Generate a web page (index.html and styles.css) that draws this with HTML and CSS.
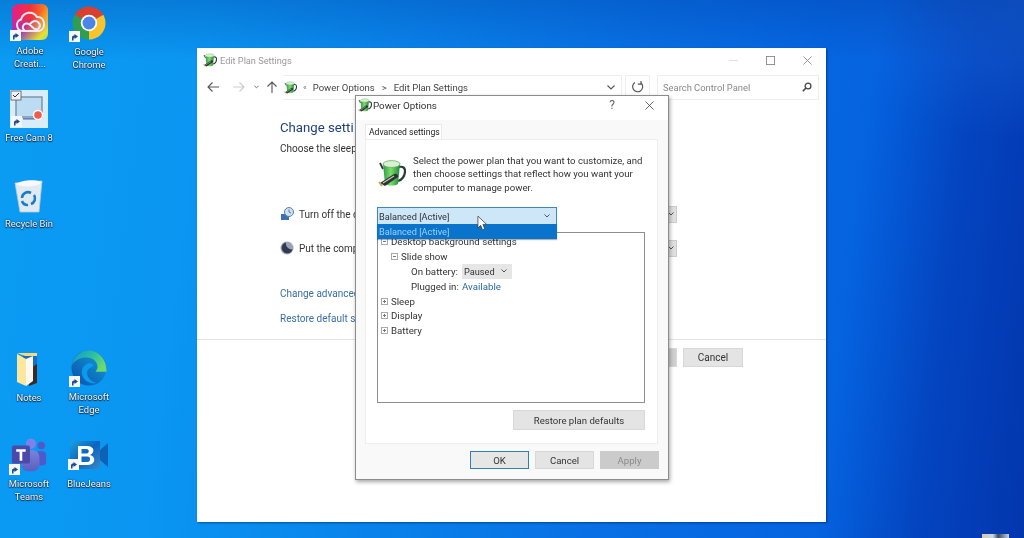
FILE: index.html
```html
<!DOCTYPE html>
<html lang="en">
<head>
<meta charset="utf-8">
<title>Power Options</title>
<link rel="stylesheet" href="styles.css">
</head>
<body>
<svg class="defs" width="0" height="0" aria-hidden="true">
  <defs>
    <linearGradient id="gBattery" x1="0" y1="0" x2="1" y2="0"><stop offset="0" stop-color="#2a9a48"/><stop offset=".45" stop-color="#7edc6a"/><stop offset="1" stop-color="#1c8a3c"/></linearGradient>
    <linearGradient id="gAdobeBase" x1="0" y1="0" x2="1" y2="0"><stop offset="0" stop-color="#e0208c"/><stop offset=".5" stop-color="#f0303c"/><stop offset="1" stop-color="#f88a20"/></linearGradient>
    <linearGradient id="gAdobeL" x1="0" y1="0" x2="0" y2="1"><stop offset=".35" stop-color="#8040e0" stop-opacity="0"/><stop offset="1" stop-color="#6a3ce8"/></linearGradient>
    <linearGradient id="gAdobeR" x1="0" y1="0" x2="1" y2="1"><stop offset=".5" stop-color="#f8d020" stop-opacity="0"/><stop offset=".85" stop-color="#e8e030"/><stop offset="1" stop-color="#90e070"/></linearGradient>
    <linearGradient id="gEdge" x1="0" y1="1" x2="1" y2="0"><stop offset="0" stop-color="#0b4fa8"/><stop offset=".6" stop-color="#0f80c8"/><stop offset="1" stop-color="#1a9ad0"/></linearGradient>
    <linearGradient id="gEdgeTop" x1="0" y1="0" x2="1" y2=".5"><stop offset="0" stop-color="#1098cc"/><stop offset=".6" stop-color="#30c0a0"/><stop offset="1" stop-color="#6bd870"/></linearGradient>
    <linearGradient id="gTeams" x1="0" y1="0" x2="0" y2="1"><stop offset="0" stop-color="#7b83d8"/><stop offset="1" stop-color="#5a5fc0"/></linearGradient>
    <linearGradient id="gBlue" x1="0" y1="0" x2="1" y2="1"><stop offset="0" stop-color="#1aa0e0"/><stop offset=".5" stop-color="#0c64bc"/><stop offset="1" stop-color="#3a88c8"/></linearGradient>
    <symbol id="power" viewBox="0 0 28 28">
      <path d="M21 8c4-1 6 1 6 4 0 5-3 9-7 10" fill="none" stroke="#2e3a38" stroke-width="2.200"/>
      <path d="M2 4l3 6" stroke="#2e3a38" stroke-width="1.800"/>
      <path d="M5 5h17l-2 20c-3 2-10 2-13 0z" fill="url(#gBattery)"/>
      <ellipse cx="13.500" cy="5" rx="8.500" ry="3.400" fill="#d8f2d0" stroke="#5aa060" stroke-width=".7"/>
      <path d="M2 24 16 15c2-1 5 1 4 3L7 27z" fill="#2e3432"/>
      <path d="M5 24 16 17" stroke="#c4ccc8" stroke-width="1.100"/>
      <path d="M1 23l3 4" stroke="#c8a848" stroke-width="1.800"/>
    </symbol>
    <symbol id="shortcut" viewBox="0 0 11 11">
      <rect width="11" height="11" fill="#f4f6f8"/>
      <path d="M3 9.500V6.500C3 5 4 4.500 5.500 4.500V3L9 5.500 5.500 8V6.500C4.500 6.500 4.500 7.500 4.500 9.500z" fill="#1e4a90"/>
    </symbol>
  </defs>
</svg>

<main class="desktop">
  <div class="shortcut pos-adobe">
    <span class="glyph">
      <svg class="art" viewBox="0 0 36 36"><rect width="36" height="36" rx="6" fill="url(#gAdobeBase)"/><rect width="36" height="36" rx="6" fill="url(#gAdobeL)"/><rect width="36" height="36" rx="6" fill="url(#gAdobeR)"/><path d="M11 27C4 27 3 17 9 15.500 11 8 21 6 25 13 33 12 35 25 27 27ZM13 27C8 23 13 17 17.500 20.500L22 24.500C26 27.500 30 22 26.500 18.500 23.500 15.500 20 17.500 17.500 20.500" fill="none" stroke="#fbe6f4" stroke-width="2"/></svg>
      <svg class="badge"><use href="#shortcut"/></svg>
    </span>
    <span class="label">Adobe<br>Creati...</span>
  </div>

  <div class="shortcut pos-chrome">
    <span class="glyph">
      <svg class="art" viewBox="0 0 48 48"><path d="M24 24 4.950 13A22 22 0 0 1 43.050 13z" fill="#d9402e"/><path d="M24 24 43.050 13A22 22 0 0 1 24 46z" fill="#f6c42c"/><path d="M24 24 24 46A22 22 0 0 1 4.950 13z" fill="#2f9e52"/><circle cx="24" cy="24" r="11" fill="#fff"/><circle cx="24" cy="24" r="8.600" fill="#4a86e8"/></svg>
      <svg class="badge"><use href="#shortcut"/></svg>
    </span>
    <span class="label">Google<br>Chrome</span>
  </div>

  <div class="shortcut pos-freecam">
    <span class="glyph glyph-wide">
      <svg class="art" viewBox="0 0 38 38"><rect width="38" height="38" fill="#d8ecfa"/><rect x="6" y="7" width="26" height="20" fill="#bcdcf4" stroke="#7d8f9e" stroke-width="1.400"/><rect x="13" y="28" width="14" height="1.600" fill="#5a88b8"/><circle cx="28" cy="25" r="5.200" fill="#fff"/><circle cx="28" cy="25" r="3.800" fill="#ef5b4c"/><rect x="1" y="1" width="10" height="9" fill="#eef2f4" stroke="#555" stroke-width=".8"/><path d="M3 5l2 2 4-4" fill="none" stroke="#333"/></svg>
      <svg class="badge badge-inset"><use href="#shortcut"/></svg>
    </span>
    <span class="label">Free Cam 8</span>
  </div>

  <div class="shortcut pos-bin">
    <span class="glyph">
      <svg class="art" viewBox="0 0 36 36"><path d="M4 5 31 3 28 34H9z" fill="#dfeaf2" stroke="#b9c8d2" stroke-width=".8"/><path d="M5 6c5-4 20-5 26-2-3 5-21 6-26 2z" fill="#f7f9fb"/><path d="M11 20a6 6 0 0 1 9-5M23 17a6 6 0 0 1-3 9M17 27a6 6 0 0 1-6-4" fill="none" stroke="#1d7cc8" stroke-width="2.600"/></svg>
    </span>
    <span class="label">Recycle Bin</span>
  </div>

  <div class="shortcut pos-notes">
    <span class="glyph">
      <svg class="art" viewBox="0 0 36 36"><path d="M12 1h14v30H12z" fill="#1a6fc4"/><path d="M18 17l8-5v19l-8 3z" fill="#3a2a28"/><path d="M6 1h20v3H14z" fill="#fbd879"/><path d="M6 2l9 5v27l-9-4z" fill="#fde79c"/><path d="M15 7l7-3v25l-7 5z" fill="#fbf9f0"/></svg>
    </span>
    <span class="label">Notes</span>
  </div>

  <div class="shortcut pos-edge">
    <span class="glyph">
      <svg class="art" viewBox="0 0 38 38"><circle cx="19" cy="19" r="18.500" fill="url(#gEdge)"/><path d="M37.500 23C38 10 29 .5 19 .5 10 .5 3 7 1 16c4-6 9-8 15-8 8 0 12 5 12 10 0 2-1 3-2 5z" fill="url(#gEdgeTop)"/><path d="M19 14c-5 1-9 6-7 13 2 6 8 9 15 8-6-2-10-6-10-11 0-3 2-5 5-6 3-1 2-4-3-4z" fill="#0a9bf0"/></svg>
      <svg class="badge"><use href="#shortcut"/></svg>
    </span>
    <span class="label">Microsoft<br>Edge</span>
  </div>

  <div class="shortcut pos-teams">
    <span class="glyph">
      <svg class="art" viewBox="0 0 38 38"><circle cx="32" cy="8" r="4" fill="#5059c9"/><rect x="26" y="14" width="11" height="15" rx="4" fill="#5059c9"/><circle cx="21" cy="6" r="5.500" fill="#7b83eb"/><rect x="11" y="13" width="19" height="22" rx="7" fill="url(#gTeams)"/><rect x="1" y="8" width="19" height="19" rx="2" fill="#4b4aa8"/><path d="M5.500 12h10v2.600h-3.600V24H9.100v-9.400H5.500z" fill="#fff"/></svg>
      <svg class="badge"><use href="#shortcut"/></svg>
    </span>
    <span class="label">Microsoft<br>Teams</span>
  </div>

  <div class="shortcut pos-blue">
    <span class="glyph glyph-short">
      <svg class="art art-bj" viewBox="0 0 38 28"><rect width="30" height="28" fill="url(#gBlue)"/><path d="M30 9 38 2v24l-8-7z" fill="#0d62b8"/><path class="bj-b" d="M8 5h9c8 0 8 7 3 9 6 1 6 10-2 10H8zM11.500 8v4.500h5c3 0 3-4.500 0-4.500zM11.500 15.500V21h6c3.500 0 3.500-5.500 0-5.500z"/></svg>
      <svg class="badge"><use href="#shortcut"/></svg>
    </span>
    <span class="label">BlueJeans</span>
  </div>

  <section class="window">
    <header class="win-title">
      <svg class="win-icon"><use href="#power"/></svg>
      <span class="win-name">Edit Plan Settings</span>
      <span class="win-controls">
        <svg class="ctl ctl-faint" viewBox="0 0 10 10"><path d="M0 5h10" stroke="currentColor"/></svg>
        <svg class="ctl" viewBox="0 0 10 10"><rect x=".5" y=".5" width="9" height="9" fill="none" stroke="currentColor"/></svg>
        <svg class="ctl" viewBox="0 0 10 10"><path d="M.5.500l9 9M9.500.500l-9 9" stroke="currentColor"/></svg>
      </span>
    </header>

    <nav class="win-nav">
      <svg class="nav-btn" viewBox="0 0 12 12"><path d="M12 6H1M5.500 1.500 1 6l4.500 4.500" fill="none" stroke="#555" stroke-width="1.100"/></svg>
      <svg class="nav-btn nav-off" viewBox="0 0 12 12"><path d="M0 6h11M6.500 1.500 11 6l-4.500 4.500" fill="none" stroke="#ccc" stroke-width="1.100"/></svg>
      <svg class="nav-chev" viewBox="0 0 6 4"><path d="M.5.500 3 3 5.500.5" fill="none" stroke="#555"/></svg>
      <svg class="nav-btn" viewBox="0 0 12 12"><path d="M6 12V1M1.500 5.500 6 1l4.500 4.500" fill="none" stroke="#555" stroke-width="1.100"/></svg>
      <div class="address">
        <svg class="addr-icon"><use href="#power"/></svg>
        <span class="addr-sep">«</span>
        <span class="addr-item">Power Options</span>
        <span class="addr-gt">&gt;</span>
        <span class="addr-item">Edit Plan Settings</span>
        <svg class="addr-drop" viewBox="0 0 8 5"><path d="M.5.500 4 4 7.500.5" fill="none" stroke="#555" stroke-width="1.100"/></svg>
      </div>
      <div class="refresh">
        <svg class="refresh-icon" viewBox="0 0 12 12"><path d="M3 1.500A5 5 0 1 0 9.500 2.500M9 0v3.200H5.800" fill="none" stroke="#555" stroke-width="1.200"/></svg>
      </div>
      <div class="search">
        <span>Search Control Panel</span>
        <svg class="search-icon" viewBox="0 0 10 10"><circle cx="6" cy="4" r="2.900" fill="none" stroke="#444" stroke-width="1.300"/><path d="M4 6 .8 9.200" stroke="#444" stroke-width="1.600"/></svg>
      </div>
    </nav>

    <div class="win-body">
      <h1 class="plan-title">Change setti</h1>
      <p class="plan-sub">Choose the sleep</p>
      <div class="plan-row plan-row-first">
        <svg class="plan-icon" viewBox="0 0 14 14"><path d="M1 7h8v6H1z" fill="#3b6fb8"/><circle cx="9" cy="5" r="4.500" fill="#cfe0f0" stroke="#5c7ea8"/><path d="M9 2.500V5l2 1" fill="none" stroke="#3b5f90" stroke-width=".8"/></svg>
        <span class="plan-text">Turn off the d</span>
        <span class="plan-select"><svg class="plan-chev" viewBox="0 0 6 4"><path d="M.5.500 3 3 5.500.5" fill="none" stroke="#555"/></svg></span>
      </div>
      <div class="plan-row">
        <svg class="plan-icon" viewBox="0 0 14 14"><circle cx="7" cy="7" r="6.500" fill="#9aa4b6"/><path d="M6 1.500a5.500 5.500 0 1 0 6.500 7A6 6 0 0 1 6 1.500z" fill="#2f3a50"/></svg>
        <span class="plan-text">Put the comp</span>
        <span class="plan-select"><svg class="plan-chev" viewBox="0 0 6 4"><path d="M.5.500 3 3 5.500.5" fill="none" stroke="#555"/></svg></span>
      </div>
      <a class="plan-link plan-link-first">Change advanced</a>
      <a class="plan-link">Restore default se</a>
    </div>

    <footer class="win-foot">
      <span class="btn btn-save"></span>
      <button class="btn btn-foot">Cancel</button>
    </footer>
  </section>

  <section class="dialog">
    <header class="dlg-title">
      <svg class="win-icon"><use href="#power"/></svg>
      <span class="dlg-name">Power Options</span>
      <span class="dlg-help">?</span>
      <svg class="dlg-close" viewBox="0 0 10 10"><path d="M.5.500l9 9M9.500.500l-9 9" stroke="#444" stroke-width=".9"/></svg>
    </header>
    <div class="tab">Advanced settings</div>
    <div class="panel">
      <div class="intro">
        <svg class="intro-icon"><use href="#power"/></svg>
        <p class="intro-text">Select the power plan that you want to customize, and<br>then choose settings that reflect how you want your<br>computer to manage power.</p>
      </div>
      <div class="combo-wrap">
        <div class="combo">
          <span>Balanced [Active]</span>
          <svg class="combo-chev" viewBox="0 0 6 4"><path d="M.5.500 3 3 5.500.5" fill="none" stroke="#555"/></svg>
        </div>
        <div class="combo-list">Balanced [Active]</div>
        <svg class="cursor" viewBox="0 0 12 17"><path d="M1 1v13l3-3 2 5 2.500-1-2-5h4z" fill="#fff" stroke="#333" stroke-width=".8"/></svg>
      </div>
      <div class="tree">
        <div class="tree-row lvl-1"><span class="exp"></span>Desktop background settings</div>
        <div class="tree-row lvl-2"><span class="exp"></span>Slide show</div>
        <div class="tree-row lvl-3"><span class="tree-key">On battery:</span><span class="mini-select">Paused<svg class="mini-chev" viewBox="0 0 6 4"><path d="M.5.500 3 3 5.500.5" fill="none" stroke="#555"/></svg></span></div>
        <div class="tree-row lvl-3"><span class="tree-key">Plugged in:</span><a class="tree-link">Available</a></div>
        <div class="tree-row lvl-1"><span class="exp exp-plus"></span>Sleep</div>
        <div class="tree-row lvl-1"><span class="exp exp-plus"></span>Display</div>
        <div class="tree-row lvl-1"><span class="exp exp-plus"></span>Battery</div>
      </div>
      <div class="restore-row"><button class="btn btn-restore">Restore plan defaults</button></div>
    </div>
    <footer class="dlg-foot">
      <button class="btn btn-dlg btn-ok">OK</button>
      <button class="btn btn-dlg">Cancel</button>
      <button class="btn btn-dlg btn-off">Apply</button>
    </footer>
  </section>

  <div class="corner-icon"></div>
</main>
</body>
</html>
```
FILE: styles.css
```css
* { box-sizing: border-box; }
html, body { margin: 0; padding: 0; }
body { width: 1024px; height: 538px; overflow: hidden; font-family: Roboto, "Noto Sans", sans-serif; font-size: 10px; color: #333; }
.defs { position: absolute; }
.desktop {
  position: relative; width: 1024px; height: 538px; overflow: hidden; filter: blur(.45px);
  background:
    linear-gradient(180deg, rgba(0,50,150,.28) 0, rgba(0,50,150,0) 60px),
    radial-gradient(200px 140px at 100% 0, rgba(30,110,220,.5), rgba(30,110,220,0)),
    linear-gradient(97deg, #0a9cf3 0%, #0a96f2 19%, #0870e4 60%, #0563e0 81%, #0444c0 90%, #0236ad 100%);
}

/* desktop shortcuts */
.shortcut { position: absolute; width: 60px; display: flex; flex-direction: column; align-items: center; }
.pos-adobe { left: 0; top: 4px; }
.pos-chrome { left: 59px; top: 5px; }
.pos-freecam { left: -1px; top: 90px; }
.pos-bin { left: -1px; top: 178px; }
.pos-notes { left: -1px; top: 352px; }
.pos-edge { left: 59px; top: 350px; }
.pos-teams { left: -1px; top: 438px; }
.pos-blue { left: 59px; top: 441px; }
.glyph { position: relative; display: block; width: 36px; height: 36px; }
.glyph-wide { width: 38px; height: 38px; }
.glyph-short { width: 38px; height: 28px; }
.art { display: block; width: 100%; height: 100%; }
.badge { position: absolute; left: -2px; bottom: -1px; width: 11px; height: 11px; }
.badge-inset { left: 1px; bottom: 1px; }
.label { margin-top: 4px; text-align: center; font-size: 9.400px; line-height: 13px; color: #f2f6fa; text-shadow: 0 1px 1px #123, 0 0 2px #123; white-space: nowrap; }
.pos-freecam .label, .pos-bin .label, .pos-notes .label, .pos-teams .label { margin-top: 3px; }
.pos-edge .label { margin-top: 4px; }
.pos-blue .label { margin-top: 8px; }
.bj-b { fill: #fff; fill-rule: evenodd; }

/* main window */
.window { position: absolute; left: 197px; top: 48px; width: 629px; height: 474px; background: #fff; display: flex; flex-direction: column; box-shadow: 1px 1px 2px rgba(0,20,80,.5); }
.win-title { height: 26px; display: flex; align-items: center; padding: 0 0 2px 6px; }
.win-icon { width: 14px; height: 14px; flex: none; }
.win-name { margin-left: 3px; color: #9a9a9a; font-size: 9.200px; }
.win-controls { margin-left: auto; display: flex; gap: 28px; padding-right: 14px; color: #8a8a8a; }
.ctl { width: 9px; height: 9px; }
.ctl-faint { color: #ddd; }
.win-nav { height: 26px; display: flex; align-items: center; padding-left: 10px; font-size: 9.500px; }
.nav-btn { width: 12px; height: 12px; flex: none; margin-right: 14px; }
.nav-off { margin-right: 9px; }
.nav-chev { width: 5px; height: 4px; flex: none; margin-right: 7px; }
.address { width: 339px; height: 25px; margin-left: -9px; border: 1px solid #eee; border-left: 0; display: flex; align-items: center; padding-left: 1px; color: #444; }
.addr-icon { width: 13px; height: 13px; flex: none; }
.addr-sep { color: #777; font-size: 8px; margin: 0 6px; }
.addr-item { white-space: nowrap; }
.addr-gt { color: #555; margin: 0 7px; }
.addr-drop { width: 8px; height: 5px; margin-left: auto; margin-right: 6px; }
.refresh { width: 25px; height: 25px; margin-left: 3px; border: 1px solid #eee; display: flex; align-items: center; justify-content: center; }
.refresh-icon { width: 12px; height: 12px; }
.search { width: 162px; height: 25px; margin-left: 7px; border: 1px solid #eee; display: flex; align-items: center; justify-content: space-between; padding: 0 6px 0 5px; color: #888; font-size: 9.400px; }
.search-icon { width: 10px; height: 10px; }
.win-body { flex: 1; padding: 18px 83px 0; }
.plan-title { margin: 0; white-space: nowrap; font-size: 13.200px; font-weight: 400; line-height: 20px; color: #1f3f7e; }
.plan-sub { margin: 4px 0 0; line-height: 14px; color: #333; white-space: nowrap; }
.plan-row { height: 18px; margin-top: 16px; display: flex; align-items: center; gap: 5px; }
.plan-row-first { margin-top: 49px; }
.plan-icon { width: 14px; height: 14px; flex: none; }
.plan-text { white-space: nowrap; }
.plan-select { margin-left: auto; width: 30px; height: 17px; margin-right: 66px; background: #e0e0e0; border: 1px solid #ccc; display: flex; align-items: center; justify-content: flex-end; padding-right: 2px; }
.plan-chev { width: 6px; height: 4px; }
.plan-link { display: block; line-height: 14px; margin-top: 11px; color: #3a6ea5; white-space: nowrap; }
.plan-link-first { margin-top: 30px; }
.win-foot { height: 183px; border-top: 1px solid #e4e4e4; display: flex; justify-content: flex-end; align-items: flex-start; gap: 6px; padding: 8px 83px 0 0; }
.btn { font: inherit; color: #333; background: #e4e4e4; border: 1px solid #d8d8d8; padding: 0; }
.btn-foot { width: 60px; height: 19px; }
.btn-save { width: 80px; height: 19px; background: #cfcfcf; }

/* dialog */
.dialog { position: absolute; left: 355px; top: 95px; width: 314px; height: 385px; font-size: 9.600px; background: #f9f9f9; border: 1px solid #8c8c8c; box-shadow: 1px 2px 4px rgba(0,0,0,.35); display: flex; flex-direction: column; }
.dlg-title { height: 24px; flex: none; display: flex; align-items: center; padding: 0 0 6px 2px; background: #fff; }
.dlg-name { margin-left: 1px; color: #333; font-size: 9.800px; }
.dlg-help { margin-left: auto; color: #666; font-size: 12px; }
.dlg-close { width: 9px; height: 9px; margin: 0 14px 0 30px; }
.tab { align-self: flex-start; margin: 4px 0 0 9px; width: 77px; height: 15px; background: #fff; border: 1px solid #eaeaea; border-bottom: 0; font-size: 8.600px; line-height: 14px; padding-left: 3px; color: #222; white-space: nowrap; }
.panel { flex: none; height: 305px; margin: 0 10px 0 9px; background: #fff; border: 1px solid #eee; padding: 13px 12px 0 11px; }
.intro { display: flex; height: 41px; }
.intro-icon { width: 28px; height: 28px; flex: none; margin: 6px 7px 0 1px; }
.intro-text { margin: 0; padding-top: .5px; line-height: 13.500px; color: #333; white-space: nowrap; }
.combo-wrap { position: relative; margin-top: 13px; height: 18px; width: 180px; font-size: 9.200px; }
.combo { height: 18px; background: #cde6f8; border: 1px solid #3f88bd; display: flex; align-items: center; justify-content: space-between; padding: 0 6px 0 1px; color: #333; }
.combo-chev { width: 6px; height: 4px; }
.combo-list { position: absolute; z-index: 2; left: 0; top: 17px; width: 180px; height: 15px; background: #0a74cc; color: #9fd0f5; line-height: 16px; padding-left: 2px; box-shadow: 0 1px 1px rgba(0,0,0,.3); }
.cursor { position: absolute; z-index: 3; left: 100px; top: 8px; width: 11px; height: 16px; }
.tree { margin-top: 7px; height: 171px; border: 1px solid #8e8e8e; padding-top: 1px; font-size: 9.700px; }
.tree-row { height: 14.900px; display: flex; align-items: center; color: #333; white-space: nowrap; }
.lvl-1 { padding-left: 3px; }
.lvl-2 { padding-left: 13px; }
.lvl-3 { padding-left: 33px; }
.exp { position: relative; width: 7px; height: 7px; border: 1px solid #aaa; margin-right: 3px; flex: none; }
.exp::before { content: ""; position: absolute; left: 1px; top: 2px; width: 3px; height: 1px; background: #777; }
.exp-plus::after { content: ""; position: absolute; left: 2px; top: 1px; width: 1px; height: 3px; background: #777; }
.tree-key { width: 51px; flex: none; }
.mini-select { width: 50px; height: 15px; background: #e6e6e6; display: flex; align-items: center; justify-content: space-between; padding: 0 5px 0 2px; font-size: 9.200px; }
.mini-chev { width: 6px; height: 4px; }
.tree-link { color: #2b6aa8; }
.restore-row { margin-top: 7px; display: flex; justify-content: flex-end; }
.btn-restore { width: 132px; height: 20px; }
.dlg-foot { flex: 1; display: flex; justify-content: flex-end; gap: 6px; padding: 7px 9px 0 0; align-items: flex-start; }
.btn-dlg { width: 59px; height: 18px; }
.btn-ok { border: 1px solid #2f7fb8; background: #e6e6e6; }
.btn-off { background: #cbcbcb; border-color: #cbcbcb; color: #8a8a8a; }
.corner-icon { position: absolute; left: 982px; top: 534px; width: 27px; height: 4px; background: linear-gradient(90deg, #d8c8a8, #c8d4e8 40%, #3a4a60 60%, #c8d4e8); }
```
